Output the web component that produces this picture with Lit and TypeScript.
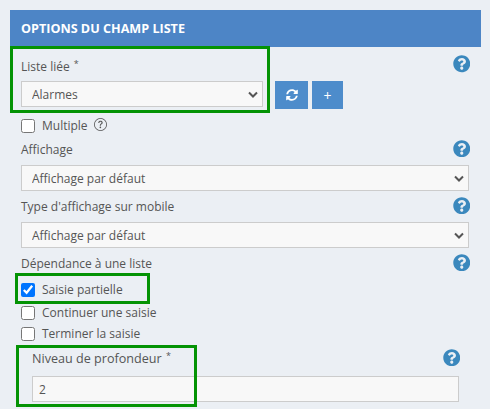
import { LitElement, html, css, svg } from "lit";
import { customElement } from "lit/decorators.js";

const helpPath = "M504 256c0 136.997-111.043 248-248 248S8 392.997 8 256C8 119.083 119.043 8 256 8s248 111.083 248 248zM262.655 90c-54.497 0-89.255 22.957-116.549 63.758-3.536 5.286-2.353 12.415 2.715 16.258l34.699 26.31c5.205 3.947 12.621 3.008 16.665-2.122 17.864-22.658 30.113-35.797 57.303-35.797 20.429 0 45.698 13.148 45.698 32.958 0 14.976-12.363 22.667-32.534 33.976C247.128 238.528 216 254.941 216 296v4c0 6.627 5.373 12 12 12h56c6.627 0 12-5.373 12-12v-1.333c0-28.462 83.186-29.647 83.186-106.667 0-58.002-60.165-102-116.531-102zM256 338c-25.365 0-46 20.635-46 46 0 25.364 20.635 46 46 46s46-20.636 46-46c0-25.365-20.635-46-46-46z";
const syncPath = "M370.72 133.28C339.458 104.008 298.888 87.962 255.848 88c-77.458.068-144.328 53.178-162.791 126.85-1.344 5.363-6.122 9.15-11.651 9.15H24.103c-7.498 0-13.194-6.807-11.807-14.176C33.933 94.924 134.813 8 256 8c66.448 0 126.791 26.136 171.315 68.685L463.03 40.97C478.149 25.851 504 36.559 504 57.941V192c0 13.255-10.745 24-24 24H345.941c-21.382 0-32.09-25.851-16.971-40.971l41.75-41.749zM32 296h134.059c21.382 0 32.09 25.851 16.971 40.971l-41.75 41.75c31.262 29.273 71.835 45.319 114.876 45.28 77.418-.07 144.315-53.144 162.787-126.849 1.344-5.363 6.122-9.15 11.651-9.15h57.304c7.498 0 13.194 6.807 11.807 14.176C478.067 417.076 377.187 504 256 504c-66.448 0-126.791-26.136-171.315-68.685L48.97 471.03C33.851 486.149 8 475.441 8 454.059V320c0-13.255 10.745-24 24-24z";

const help = () => html`<svg class="help" viewBox="0 0 512 512"><path d=${helpPath}></path></svg>`;

@customElement("app-root")
export class AppRoot extends LitElement {
  static styles = css`
    :host { display: block; width: 490px; height: 409px; overflow: hidden; background: #ebeff4; position: relative; font-family: "Open Sans", sans-serif; font-size: 12px; color: #555; }
    .panel { padding: 10px 9px 0 10px; }
    .title { height: 37px; background: #4d85c6; color: #fff; font-weight: 700; font-size: 12.6px; display: flex; align-items: center; padding-left: 11px; }
    .body { padding: 7px 12px 0 11px; display: flex; flex-direction: column; }
    .lab { display: flex; justify-content: space-between; align-items: center; height: 19px; flex: none; }
    .lab .help { margin-top: -2px; }
    .lab.low .help { margin-top: 1px; }
    .low > span { margin-top: 5px; }
    .req { font-size: 9px; line-height: 1; vertical-align: 4px; margin-left: 1px; }
    .help { width: 17.5px; height: 17.5px; fill: #3b88bd; flex: none; margin-right: -1px; }
    .sel-row { display: flex; align-items: flex-start; margin-top: 8px; }
    select, input[type="text"] { font: inherit; color: #555; background-color: #f8f8f8; border: 1px solid #ccc; border-radius: 0; box-sizing: border-box; padding: 0 10px; margin: 0; outline: none; display: block; flex: none; }
    select { appearance: none; background-image: url("data:image/svg+xml,%3Csvg xmlns='http://www.w3.org/2000/svg' viewBox='0 0 10 7'%3E%3Cpath d='M1 1.5l4 4 4-4' fill='none' stroke='%23555' stroke-width='2'/%3E%3C/svg%3E"); background-repeat: no-repeat; background-size: 10px 7px; background-position: right 4px center; }
    .sel-row select { width: 242px; height: 26px; }
    .full { width: 448px; height: 26px; }
    .btn { background: #4d8ccb; border: 0; color: #fff; height: 28px; padding: 0; display: flex; align-items: center; justify-content: center; font: inherit; }
    .btn svg { width: 12px; height: 12px; fill: #fff; }
    .b1 { width: 33px; margin-left: 12px; }
    .b2 { width: 31px; margin-left: 4px; font-size: 14px; }
    .check { display: flex; align-items: center; height: 21px; flex: none; }
    .check input { width: 14px; height: 14px; margin: 0 7px 0 0; }
    .small-help { width: 13px; height: 13px; fill: #555; margin-left: 6px; margin-top: -2px; }
    .m4 { margin-top: 4px; }
    .m6 { margin-top: 6px; }
    .m2 { margin-top: 2px; }
    .depth { padding-left: 11px; margin-top: 5px; }
    .depth .lab { width: 427px; font-size: 12.6px; }
    .depth input { width: 427px; height: 26px; margin-top: 8px; padding: 0 6px; }
    .hl { position: absolute; border: 3px solid #049304; box-sizing: border-box; pointer-events: none; }
    .h1 { left: 10px; top: 46px; width: 260px; height: 67px; }
    .h2 { left: 15px; top: 273px; width: 135px; height: 31px; }
    .h3 { left: 16px; top: 345px; width: 181px; height: 62px; }
  `;

  render() {
    return html`
      <div class="panel">
        <div class="title">OPTIONS DU CHAMP LISTE</div>
        <div class="body">
          <div class="lab low"><span>Liste liée <span class="req">*</span></span>${help()}</div>
          <div class="sel-row">
            <select><option>Alarmes</option></select>
            <button class="btn b1"><svg viewBox="0 0 512 512"><path d=${syncPath}></path></svg></button>
            <button class="btn b2">+</button>
          </div>
          <div class="check m6">
            <input type="checkbox" /><span>Multiple</span>
            <svg class="small-help" viewBox="0 0 16 16">
              ${svg`<path d="M8 15A7 7 0 1 1 8 1a7 7 0 0 1 0 14zm0 1A8 8 0 1 0 8 0a8 8 0 0 0 0 16z"></path><path d="M5.255 5.786a.237.237 0 0 0 .241.247h.825c.138 0 .248-.113.266-.25.09-.656.54-1.134 1.342-1.134.686 0 1.314.343 1.314 1.168 0 .635-.374.927-.965 1.371-.673.489-1.206 1.06-1.168 1.987l.003.217a.25.25 0 0 0 .25.246h.811a.25.25 0 0 0 .25-.25v-.105c0-.718.273-.927 1.01-1.486.609-.463 1.244-.977 1.244-2.056 0-1.511-1.276-2.241-2.673-2.241-1.267 0-2.655.59-2.75 2.286zm1.557 5.763c0 .533.425.927 1.01.927.609 0 1.028-.394 1.028-.927 0-.552-.42-.94-1.029-.94-.584 0-1.009.388-1.009.94z"></path>`}
            </svg>
          </div>
          <div class="lab m4"><span>Affichage</span>${help()}</div>
          <select class="full m6"><option>Affichage par défaut</option></select>
          <div class="lab m6"><span>Type d'affichage sur mobile</span>${help()}</div>
          <select class="full m6"><option>Affichage par défaut</option></select>
          <div class="lab m6"><span>Dépendance à une liste</span>${help()}</div>
          <div class="check m6"><input type="checkbox" checked /><span>Saisie partielle</span></div>
          <div class="check m2"><input type="checkbox" /><span>Continuer une saisie</span></div>
          <div class="check"><input type="checkbox" /><span>Terminer la saisie</span></div>
          <div class="depth">
            <div class="lab"><span>Niveau de profondeur <span class="req">*</span></span>${help()}</div>
            <input type="text" value="2" />
          </div>
        </div>
      </div>
      <div class="hl h1"></div>
      <div class="hl h2"></div>
      <div class="hl h3"></div>
    `;
  }
}
